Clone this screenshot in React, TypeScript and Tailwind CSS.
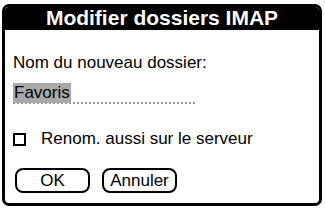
export default function App() {
  return (
    <div className="w-[325px] h-[210px] bg-white pt-[4px] pl-[2px] font-['Liberation_Sans',Arial,sans-serif] text-black">
      <div className="w-[320px] h-[202px] border-[3px] border-black rounded-[7px] flex flex-col overflow-hidden">
        <div className="h-[24px] bg-black text-white font-bold text-[21px] leading-[24px] text-center -mt-[1px]">
          Modifier dossiers IMAP
        </div>
        <div className="pl-[8px] pt-[23px] text-[17px] leading-[20px]">
          <p>Nom du nouveau dossier:</p>
          <div className="mt-[10px] flex">
            <div className="w-[182px] h-[21px] border-b-[2px] border-dotted border-[#9a9a9a]">
              <span className="bg-[#a9a9a9] px-[1px] inline-block h-[20px]">Favoris</span>
            </div>
          </div>
          <label className="mt-[25px] flex items-center gap-[15px]">
            <span className="w-[13px] h-[13px] border-[2px] border-black inline-block" />
            <span>Renom. aussi sur le serveur</span>
          </label>
          <div className="mt-[19px] flex gap-[12px] pl-[2px]">
            <button className="w-[75px] h-[25px] border-[2px] border-black rounded-[8px] text-[17px] leading-[20px]">OK</button>
            <button className="w-[75px] h-[25px] border-[2px] border-black rounded-[8px] text-[17px] leading-[20px]">Annuler</button>
          </div>
        </div>
      </div>
    </div>
  );
}
